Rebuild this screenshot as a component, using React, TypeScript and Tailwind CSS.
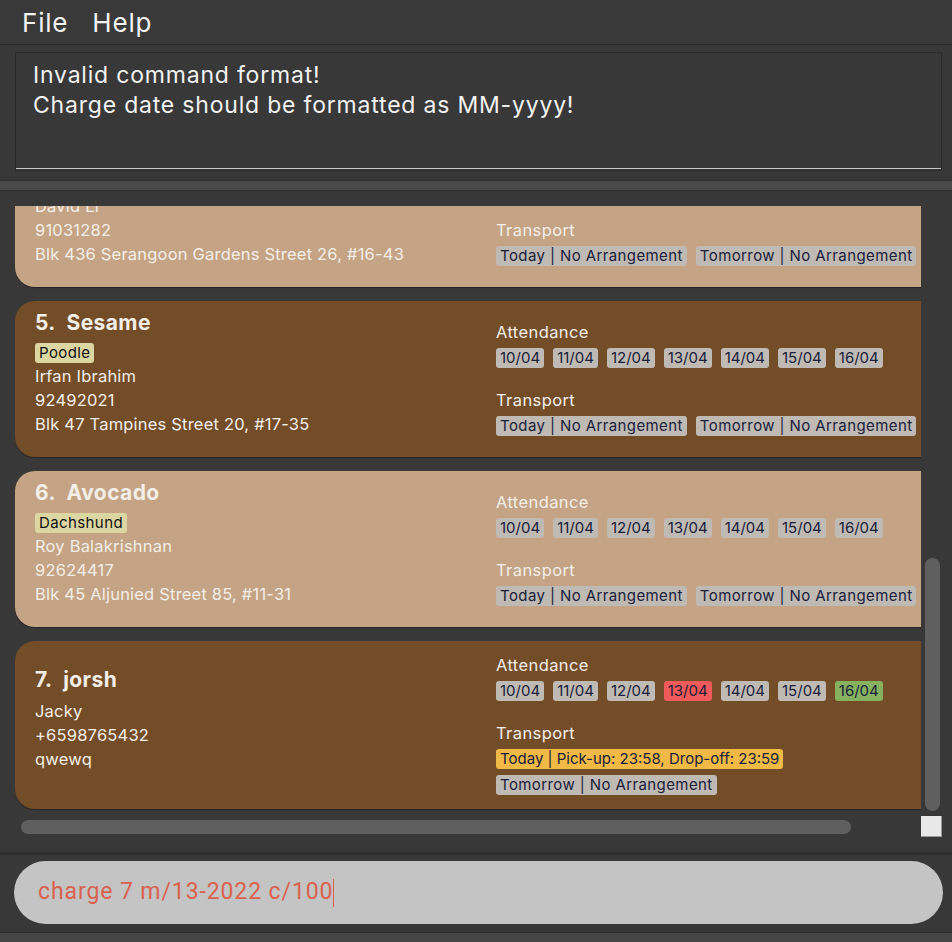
import React from "react";

type Tone = "grey" | "red" | "green" | "yellow";

interface ChipProps {
  text: string;
  tone?: Tone;
  wide?: boolean;
}

function Chip({ text, tone = "grey", wide }: ChipProps) {
  const bg =
    tone === "red"
      ? "bg-[#f05a5a]"
      : tone === "green"
        ? "bg-[#86b25f]"
        : tone === "yellow"
          ? "bg-[#f1b946]"
          : "bg-[#bfbab3]";
  return (
    <span
      className={`${bg} ${wide ? "tracking-[0.4px]" : "tracking-normal"} h-[20px] whitespace-nowrap rounded-[3px] px-[4px] text-[15px] leading-[20px] text-[#19213b]`}
    >
      {text}
    </span>
  );
}

interface Pet {
  index: number;
  name: string;
  tag?: string;
  owner: string;
  phone: string;
  address: string;
  light: boolean;
  dates: { text: string; tone?: Tone }[];
  transport: { text: string; tone?: Tone }[];
}

const week = ["10/04", "11/04", "12/04", "13/04", "14/04", "15/04", "16/04"];
const plainWeek = week.map((d) => ({ text: d }));
const noTransport = [
  { text: "Today | No Arrangement" },
  { text: "Tomorrow | No Arrangement" },
];

const pets: Pet[] = [
  {
    index: 4,
    name: "Bagel",
    tag: "Shiba",
    owner: "David Li",
    phone: "91031282",
    address: "Blk 436 Serangoon Gardens Street 26, #16-43",
    light: true,
    dates: plainWeek,
    transport: noTransport,
  },
  {
    index: 5,
    name: "Sesame",
    tag: "Poodle",
    owner: "Irfan Ibrahim",
    phone: "92492021",
    address: "Blk 47 Tampines Street 20, #17-35",
    light: false,
    dates: plainWeek,
    transport: noTransport,
  },
  {
    index: 6,
    name: "Avocado",
    tag: "Dachshund",
    owner: "Roy Balakrishnan",
    phone: "92624417",
    address: "Blk 45 Aljunied Street 85, #11-31",
    light: true,
    dates: plainWeek,
    transport: noTransport,
  },
  {
    index: 7,
    name: "jorsh",
    owner: "Jacky",
    phone: "+6598765432",
    address: "qwewq",
    light: false,
    dates: week.map((d) => ({
      text: d,
      tone: d === "13/04" ? ("red" as Tone) : d === "16/04" ? ("green" as Tone) : undefined,
    })),
    transport: [
      { text: "Today | Pick-up: 23:58, Drop-off: 23:59", tone: "yellow" },
      { text: "Tomorrow | No Arrangement" },
    ],
  },
];

function PetCard({ pet }: { pet: Pet }) {
  return (
    <div
      className={`flex min-h-[156px] w-[980px] shrink-0 items-center rounded-[20px] pl-[20px] text-[#f3eee8] shadow-[0_1px_1px_rgba(0,0,0,0.35)] ${
        pet.light ? "bg-[#c4a484]" : "bg-[#734d27]"
      }`}
    >
      <div className="flex w-[461px] shrink-0 flex-col pb-[14px]">
        <div className="mb-[5px] h-[28px] whitespace-pre text-[21px] font-bold leading-[28px] tracking-[0.4px]">
          {pet.index}.{"\u00a0\u00a0"}
          {pet.name}
        </div>
        {pet.tag && (
          <div className="my-[1px] flex">
            <span className="h-[20px] rounded-[3px] bg-[#dcd6a2] px-[4px] text-[15px] leading-[20px] tracking-[0.4px] text-[#111]">
              {pet.tag}
            </span>
          </div>
        )}
        <div className="text-[16.5px] leading-[24px] tracking-[0.2px]">{pet.owner}</div>
        <div className="text-[16.5px] leading-[24px] tracking-[0.2px]">{pet.phone}</div>
        <div className="whitespace-nowrap text-[16.5px] leading-[24px] tracking-[0.2px]">
          {pet.address}
        </div>
      </div>
      <div className="flex w-[470px] shrink-0 flex-col py-[14px]">
        <div className="mb-[6px] text-[16.5px] leading-[20px] tracking-[0.4px]">Attendance</div>
        <div className="flex flex-wrap gap-x-[9px] gap-y-[6px]">
          {pet.dates.map((d) => (
            <Chip key={d.text} text={d.text} tone={d.tone} />
          ))}
        </div>
        <div className="mb-[6px] mt-[22px] text-[16.5px] leading-[20px] tracking-[0.4px]">
          Transport
        </div>
        <div className="flex flex-wrap gap-x-[9px] gap-y-[6px]">
          {pet.transport.map((t) => (
            <Chip key={t.text} text={t.text} tone={t.tone} wide={t.text.includes("No Arrangement")} />
          ))}
        </div>
      </div>
    </div>
  );
}

export default function App() {
  return (
    <div className="flex h-[942px] w-[952px] flex-col overflow-hidden bg-[#383838] font-['Inter','Open_Sans',sans-serif] text-[#f2f2f2]">
      {/* menu */}
      <div className="flex h-[45px] shrink-0 items-center gap-[24px] border-b border-[#2b2b2b] bg-[#393939] pl-[22px] text-[26px] tracking-[0.8px]">
        <span>File</span>
        <span>Help</span>
      </div>

      {/* result display */}
      <div className="h-[135px] shrink-0 bg-[#383838] pl-[15px] pr-[10px] pt-[7px]">
        <div className="flex h-[119px] flex-col border border-[#2a2a2a]">
          <div className="flex-1 pl-[17px] pt-[7px] text-[23px] leading-[30px] tracking-[0.8px]">
            <div>Invalid command format!</div>
            <div>Charge date should be formatted as MM-yyyy!</div>
          </div>
          <div className="mb-[1px] h-px bg-[#c4c4c4]" />
        </div>
      </div>

      {/* splitter */}
      <div className="h-[11px] shrink-0 border-y border-[#2e2e2e] bg-[#4a4a4a]" />

      {/* list */}
      <div className="flex h-[661px] shrink-0 flex-col pl-[15px] pt-[15px]">
        <div className="flex">
          <div className="h-[610px] w-[906px] overflow-hidden">
            <div className="mt-[-75px] flex flex-col gap-[14px]">
              {pets.map((p) => (
                <PetCard key={p.index} pet={p} />
              ))}
            </div>
          </div>
          <div className="h-[610px] w-[21px] pl-[4px] pt-[352px]">
            <div className="h-[253px] w-[15px] rounded-full bg-[#5f5f5f]" />
          </div>
        </div>
        <div className="flex h-[21px]">
          <div className="w-[906px] pl-[6px] pt-[4px]">
            <div className="h-[14px] w-[830px] rounded-full bg-[#5f5f5f]" />
          </div>
          <div className="h-[21px] w-[21px] border-b border-r border-[#9a9a9a] bg-[#e8e8e8]" />
        </div>
      </div>

      {/* command box */}
      <div className="h-[80px] shrink-0 border-t-[3px] border-[#2f2f2f] pl-[14px] pr-[9px] pt-[6px]">
        <div className="flex h-[63px] items-center rounded-full bg-[#c4c4c4] pl-[24px] font-['Roboto',sans-serif] text-[23px] tracking-[0.9px] text-[#d9624f]">
          <span>charge 7 m/13-2022 c/100</span>
          <span className="h-[28px] w-px bg-[#d9624f]" />
        </div>
      </div>

      {/* status bar */}
      <div className="flex-1 border-t border-[#2b2b2b] bg-[#464646]" />
    </div>
  );
}
